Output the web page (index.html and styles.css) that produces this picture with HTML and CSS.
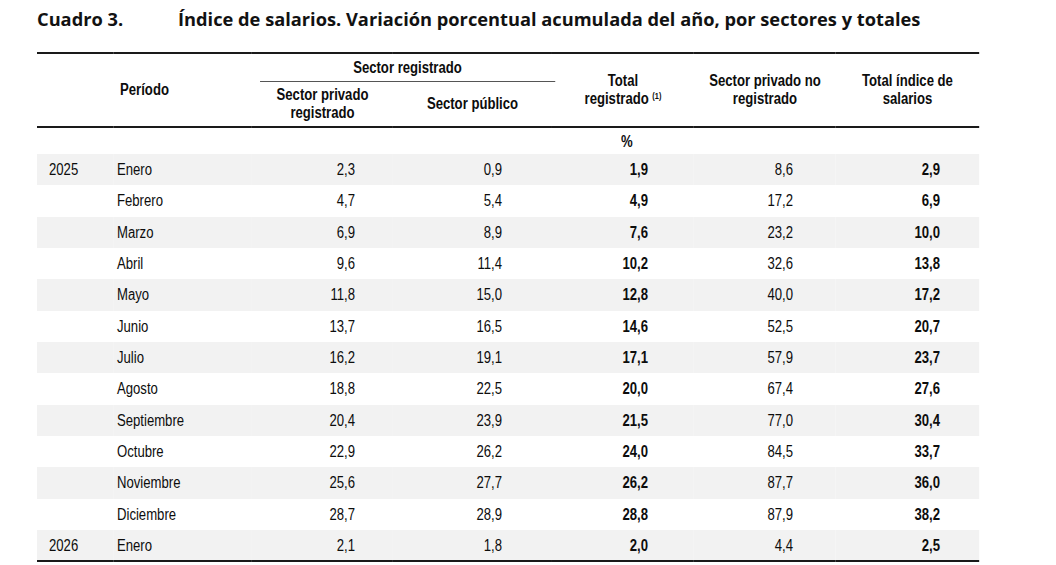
FILE: index.html
```html
<!DOCTYPE html>
<html lang="es">
<head>
<meta charset="utf-8">
<title>Cuadro 3</title>
<link rel="stylesheet" href="styles.css">
</head>
<body>
<div class="page">
  <h1 class="title"><span class="num">Cuadro 3.</span><span class="text">Índice de salarios. Variación porcentual acumulada del año, por sectores y totales</span></h1>
  <div class="tblwrap">
  <table class="tbl">
    <colgroup>
      <col class="c1"><col class="c2"><col class="c3"><col class="c4"><col class="c5"><col class="c6"><col class="c7">
    </colgroup>
    <thead>
      <tr class="h1">
        <th colspan="2" rowspan="2" class="per">Período</th>
        <th colspan="2" class="grp"><span>Sector registrado</span></th>
        <th rowspan="2">Total<br>registrado <sup>(1)</sup></th>
        <th rowspan="2">Sector privado no<br>registrado</th>
        <th rowspan="2">Total índice de<br>salarios</th>
      </tr>
      <tr class="h2">
        <th>Sector privado<br>registrado</th>
        <th>Sector público</th>
      </tr>
    </thead>
    <tbody>
      <tr class="pct"><td></td><td></td><td></td><td></td><td class="pc">%</td><td></td><td></td></tr>
      <tr class="s"><td class="y">2025</td><td class="m">Enero</td><td class="v3">2,3</td><td class="v4">0,9</td><td class="v5">1,9</td><td class="v6">8,6</td><td class="v7">2,9</td></tr>
      <tr><td class="y"></td><td class="m">Febrero</td><td class="v3">4,7</td><td class="v4">5,4</td><td class="v5">4,9</td><td class="v6">17,2</td><td class="v7">6,9</td></tr>
      <tr class="s"><td class="y"></td><td class="m">Marzo</td><td class="v3">6,9</td><td class="v4">8,9</td><td class="v5">7,6</td><td class="v6">23,2</td><td class="v7">10,0</td></tr>
      <tr><td class="y"></td><td class="m">Abril</td><td class="v3">9,6</td><td class="v4">11,4</td><td class="v5">10,2</td><td class="v6">32,6</td><td class="v7">13,8</td></tr>
      <tr class="s"><td class="y"></td><td class="m">Mayo</td><td class="v3">11,8</td><td class="v4">15,0</td><td class="v5">12,8</td><td class="v6">40,0</td><td class="v7">17,2</td></tr>
      <tr><td class="y"></td><td class="m">Junio</td><td class="v3">13,7</td><td class="v4">16,5</td><td class="v5">14,6</td><td class="v6">52,5</td><td class="v7">20,7</td></tr>
      <tr class="s"><td class="y"></td><td class="m">Julio</td><td class="v3">16,2</td><td class="v4">19,1</td><td class="v5">17,1</td><td class="v6">57,9</td><td class="v7">23,7</td></tr>
      <tr><td class="y"></td><td class="m">Agosto</td><td class="v3">18,8</td><td class="v4">22,5</td><td class="v5">20,0</td><td class="v6">67,4</td><td class="v7">27,6</td></tr>
      <tr class="s"><td class="y"></td><td class="m">Septiembre</td><td class="v3">20,4</td><td class="v4">23,9</td><td class="v5">21,5</td><td class="v6">77,0</td><td class="v7">30,4</td></tr>
      <tr><td class="y"></td><td class="m">Octubre</td><td class="v3">22,9</td><td class="v4">26,2</td><td class="v5">24,0</td><td class="v6">84,5</td><td class="v7">33,7</td></tr>
      <tr class="s"><td class="y"></td><td class="m">Noviembre</td><td class="v3">25,6</td><td class="v4">27,7</td><td class="v5">26,2</td><td class="v6">87,7</td><td class="v7">36,0</td></tr>
      <tr><td class="y"></td><td class="m">Diciembre</td><td class="v3">28,7</td><td class="v4">28,9</td><td class="v5">28,8</td><td class="v6">87,9</td><td class="v7">38,2</td></tr>
      <tr class="s last"><td class="y">2026</td><td class="m">Enero</td><td class="v3">2,1</td><td class="v4">1,8</td><td class="v5">2,0</td><td class="v6">4,4</td><td class="v7">2,5</td></tr>
    </tbody>
  </table>
  </div>
</div>
</body>
</html>
```

FILE: styles.css
```css
html, body {
  margin: 0;
  padding: 0;
  background: #ffffff;
  overflow: hidden;
}

.page {
  padding: 8px 0 0 37px;
  color: #111111;
}

.title {
  margin: 0;
  height: 44px;
  display: flex;
  font-family: "Open Sans", "Liberation Sans", sans-serif;
  font-weight: 700;
  font-size: 18.25px;
  line-height: 22px;
  color: #121212;
}

.title .num {
  width: 141px;
}

/* Condensed type: Liberation Sans narrowed horizontally (Arial Narrow proportions) */
.tblwrap {
  width: 942px;
}

.tbl {
  border-collapse: collapse;
  table-layout: fixed;
  width: 1148.78px;
  transform: scaleX(0.82);
  transform-origin: 0 0;
  font-family: "Liberation Sans", Arial, sans-serif;
  font-size: 16px;
  color: #0d0d0d;
}

.c1 { width: 92.68px; }
.c2 { width: 169.51px; }
.c3 { width: 171.95px; }
.c4 { width: 193.90px; }
.c5 { width: 173.17px; }
.c6 { width: 173.17px; }
.c7 { width: 174.39px; }

.tbl thead {
  border-top: 2px solid #1a1a1a;
  border-bottom: 2px solid #1a1a1a;
}

.tbl th {
  font-weight: 700;
  font-size: 16px;
  line-height: 18px;
  text-align: center;
  padding: 0;
  vertical-align: middle;
}

.tbl th sup {
  font-size: 9px;
  vertical-align: 5px;
  line-height: 0;
}

.h1 { height: 27px; }
.h2 { height: 45px; }

.tbl th.grp {
  padding: 0 0 0 9.76px;
  vertical-align: top;
}

.tbl th.grp span {
  display: block;
  padding: 5px 0 4px;
  border-bottom: 1px solid #555555;
  margin-right: -3.66px;
}

.tbl td {
  padding: 1px 0 0;
  line-height: 18px;
  vertical-align: middle;
}

.pct td.pc {
  text-align: center;
  font-weight: 700;
  padding-left: 9.76px;
}

.tbl tbody tr { height: 31.33px; }
.tbl tbody tr.pct { height: 27px; }
.tbl tbody tr.s { background: #f2f2f2; }
.tbl tbody tr.last { border-bottom: 2px solid #1a1a1a; }

.tbl td.y { padding-left: 14.63px; }
.tbl td.m { padding-left: 4.88px; }
.tbl td.v3, .tbl td.v4, .tbl td.v5, .tbl td.v6, .tbl td.v7 { text-align: right; }
.tbl td.v3 { padding-right: 46.34px; }
.tbl td.v4 { padding-right: 60.98px; }
.tbl td.v5 { padding-right: 56.10px; font-weight: 700; }
.tbl td.v6 { padding-right: 52.44px; }
.tbl td.v7 { padding-right: 47.56px; font-weight: 700; }
```
